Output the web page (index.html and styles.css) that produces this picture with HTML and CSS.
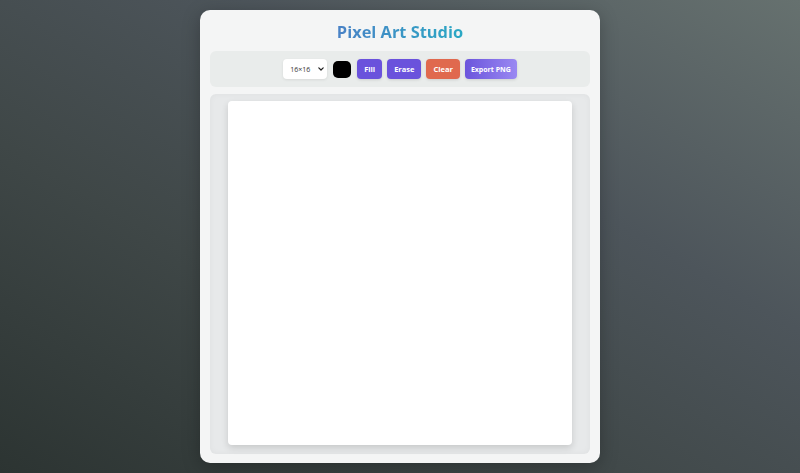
FILE: index.html
```html
<!DOCTYPE html>
<html>
<head>
<meta charset="utf-8">
<link rel="stylesheet" href="styles.css">
</head>
<body>
<div class="page">
  <div class="card">
    <h1 class="title">Pixel Art Studio</h1>
    <div class="toolbar">
      <div class="select-wrap">
        <select class="size">
          <option>16×16</option>
        </select>
        <svg class="chev" width="6" height="4" viewBox="0 0 6 4"><path d="M0.8 0.8 L3 3 L5.2 0.8" fill="none" stroke="#222" stroke-width="1.2" stroke-linecap="round" stroke-linejoin="round"/></svg>
      </div>
      <div class="swatch"></div>
      <button class="btn btn-purple">Fill</button>
      <button class="btn btn-purple">Erase</button>
      <button class="btn btn-red">Clear</button>
      <button class="btn btn-export">Export PNG</button>
    </div>
    <div class="stage">
      <div class="canvas"></div>
    </div>
  </div>
</div>
</body>
</html>
```
FILE: styles.css
```css
html, body {
  margin: 0;
  padding: 0;
  height: 100%;
}
body {
  background: linear-gradient(to top right, #2c3432 0%, #3f4747 35%, #4d555b 65%, #66716f 100%);
  font-family: "Open Sans", "Liberation Sans", sans-serif;
}
.page {
  display: flex;
  justify-content: center;
  padding-top: 10px;
}
.card {
  width: 400px;
  height: 453px;
  box-sizing: border-box;
  background: #f4f5f5;
  border-radius: 10px;
  padding: 10px 10px 9px;
  display: flex;
  flex-direction: column;
  box-shadow: 0 4px 18px rgba(0,0,0,0.25);
}
.title {
  margin: 0;
  height: 31px;
  line-height: 24px;
  text-align: center;
  font-size: 16.4px;
  font-weight: 700;
  background: linear-gradient(90deg, #4a82c6, #2aa8c4);
  -webkit-background-clip: text;
  background-clip: text;
  color: transparent;
  align-self: center;
}
.toolbar {
  height: 36px;
  background: #e9eceb;
  border-radius: 6px;
  display: flex;
  align-items: center;
  justify-content: center;
  gap: 5px;
  margin-bottom: 7px;
}
.select-wrap {
  position: relative;
  width: 44px;
  height: 20px;
  margin-right: 1px;
}
.size {
  display: block;
  -webkit-appearance: none;
  appearance: none;
  width: 44px;
  height: 20px;
  margin: 0;
  border: none;
  border-radius: 4px;
  background: #fff;
  font-family: inherit;
  font-size: 7px;
  color: #333;
  padding: 0 0 0 7px;
  box-shadow: 0 1px 3px rgba(0,0,0,0.08);
}
.chev {
  position: absolute;
  right: 3px;
  top: 8px;
  pointer-events: none;
}
.swatch {
  width: 18px;
  height: 17px;
  background: #000;
  border-radius: 5px;
  margin-right: 1px;
}
.btn {
  height: 20px;
  border: none;
  border-radius: 4px;
  color: #fff;
  font-family: inherit;
  font-weight: 700;
  font-size: 7.5px;
  padding: 0 7px;
  box-shadow: 0 1px 3px rgba(0,0,0,0.12);
}
.btn-purple {
  background: #6a52dc;
}
.btn-red {
  background: #e0694e;
}
.btn-export {
  background: linear-gradient(90deg, #6b55dc, #9a88f2);
  font-size: 7px;
  padding: 0 6px;
}
.stage {
  flex: 1;
  background: #e7e9ea;
  border-radius: 6px;
  display: flex;
  justify-content: center;
  padding-top: 7px;
  padding-bottom: 9px;
  box-shadow: inset 0 0 6px rgba(0,0,0,0.04);
}
.canvas {
  width: 344px;
  height: 344px;
  background: #fff;
  border-radius: 4px;
  box-shadow: 0 3px 7px rgba(0,0,0,0.14);
}
```
